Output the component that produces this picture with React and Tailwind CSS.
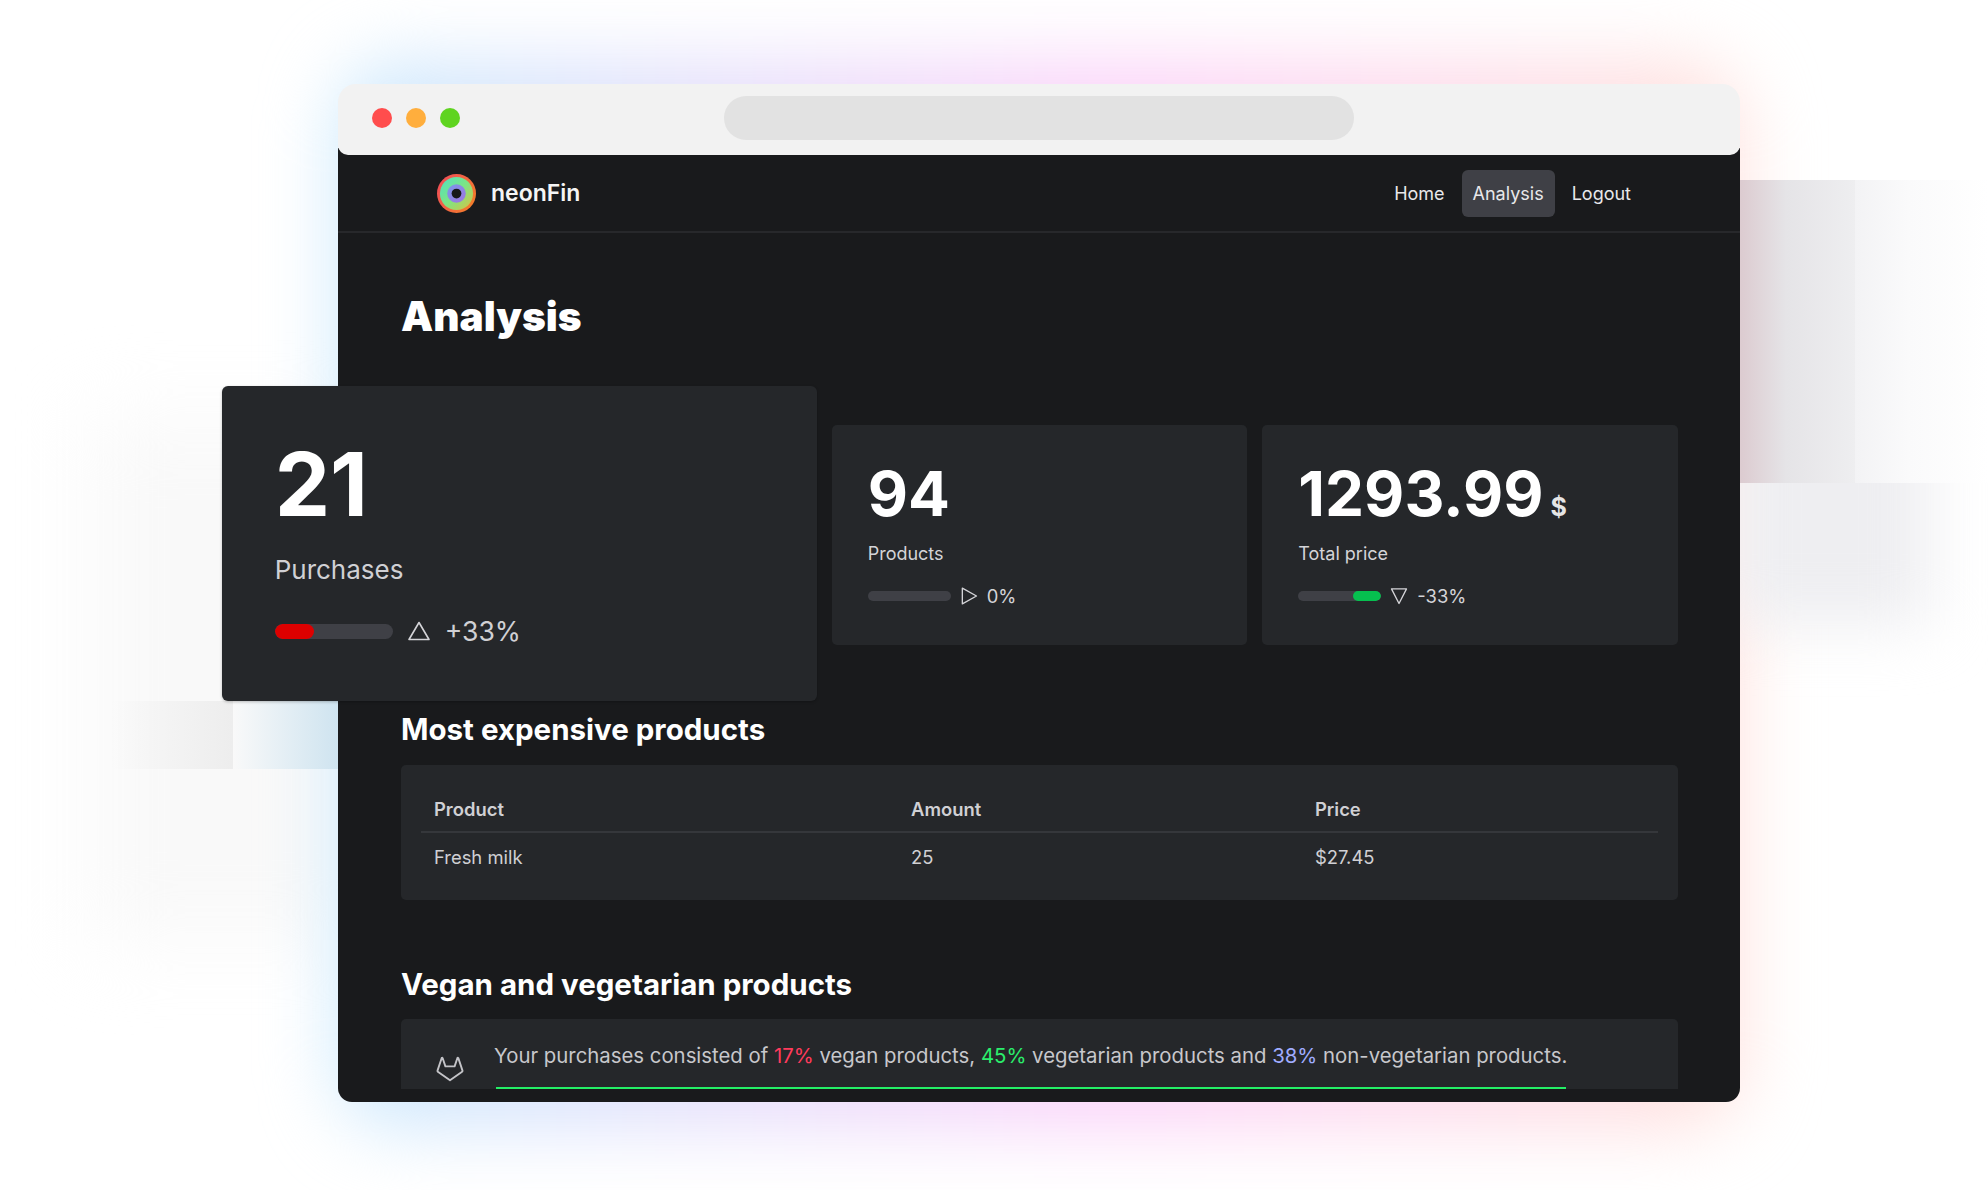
const F = { fontFamily: '"Inter", "Liberation Sans", sans-serif' };

function Tri({ dir, className }) {
  const d = {
    up: 'M12 3.5 L22 20.5 L2 20.5 Z',
    right: 'M4 2.5 L21 12 L4 21.5 Z',
    down: 'M3 3.5 L21 3.5 L12 21 Z',
  }[dir];
  return (
    <svg viewBox="0 0 24 24" fill="none" stroke="#d4d4d8" strokeWidth="1.6" strokeLinejoin="round" className={className}>
      <path d={d} />
    </svg>
  );
}

function Fox() {
  return (
    <svg viewBox="0 0 24 24" fill="none" stroke="#c4c4c8" strokeWidth="1.5" strokeLinejoin="round" strokeLinecap="round" className="w-[30px] h-[30px] shrink-0">
      <path d="m22 13.29-3.33-10a.42.42 0 0 0-.14-.18.38.38 0 0 0-.22-.11.39.39 0 0 0-.23.07.42.42 0 0 0-.14.18l-2.26 6.67H8.32L6.1 3.26a.42.42 0 0 0-.1-.18.38.38 0 0 0-.26-.08.39.39 0 0 0-.23.07.42.42 0 0 0-.14.18L2 13.29a.74.74 0 0 0 .27.83L12 21l9.69-6.88a.71.71 0 0 0 .31-.83Z" />
    </svg>
  );
}

function Logo() {
  return (
    <svg viewBox="0 0 40 40" className="w-[39px] h-[39px] shrink-0">
      <defs>
        <linearGradient id="lo" x1="0" y1="0" x2="1" y2="0.6">
          <stop offset="0" stopColor="#f0485c" />
          <stop offset="1" stopColor="#f37a2c" />
        </linearGradient>
        <linearGradient id="lg" x1="0" y1="0" x2="1" y2="1">
          <stop offset="0" stopColor="#4fe0c4" />
          <stop offset="0.5" stopColor="#7ce684" />
          <stop offset="1" stopColor="#dcc040" />
        </linearGradient>
        <linearGradient id="li" x1="0" y1="0" x2="1" y2="1">
          <stop offset="0" stopColor="#7a98e8" />
          <stop offset="1" stopColor="#a074e0" />
        </linearGradient>
      </defs>
      <circle cx="20" cy="20" r="20" fill="url(#lo)" />
      <circle cx="20" cy="20" r="17" fill="url(#lg)" />
      <circle cx="20" cy="20" r="9.5" fill="url(#li)" />
      <circle cx="20" cy="20" r="5" fill="#17181a" />
    </svg>
  );
}

function SmallCard({ value, unit, label, dir, pct, fill }) {
  return (
    <div className="bg-[#25272a] rounded-[5px] h-[220px] pl-[36px] pt-[34px]">
      <div className="flex items-baseline h-[70px]">
        <span className="text-[62px] leading-[70px] font-bold text-white">{value}</span>
        {unit && <span className="ml-[7px] text-[25px] font-bold text-[#e5e5e5]">{unit}</span>}
      </div>
      <div className="mt-[13px] text-[18px] leading-[24px] text-[#d4d4d8]">{label}</div>
      <div className="mt-[18px] flex items-center">
        <div className="w-[83px] h-[10px] rounded-full bg-[#3f4046] relative overflow-hidden">
          {fill && <div className="absolute right-0 top-0 h-full w-[28px] rounded-full bg-[#06c04f]" />}
        </div>
        <Tri dir={dir} className="ml-[8px] w-[20px] h-[20px]" />
        <span className="ml-[8px] text-[18.4px] leading-[24px] text-[#d4d4d8]">{pct}</span>
      </div>
    </div>
  );
}

export default function App() {
  return (
    <div style={F} className="relative h-[1190px] w-[1988px] overflow-hidden bg-white pl-[338px] pt-[84px]">
      {/* soft grey shadows behind everything */}
      <div className="absolute left-[90px] top-[420px] w-[270px] h-[520px] blur-[40px] bg-[#f9f9f9]" />
      {/* colour glow behind the window */}
      <div className="absolute left-[338px] top-[62px] w-[1404px] h-[1066px] blur-[36px] bg-gradient-to-r from-[#cbeafd] via-[#fbd2f9] via-55% to-[#ffe2dc] rounded-[60px]" />
      {/* ghost panels, right */}
      <div className="absolute left-[1730px] top-[400px] w-[200px] h-[225px] blur-[30px] bg-[#eeeef1]" />
      <div className="absolute left-[1740px] top-[180px] w-[115px] h-[303px] bg-gradient-to-r from-[#dccbd0] via-[#e5e4e7] via-40% to-[#eeeef0]" />
      <div className="absolute left-[1855px] top-[180px] w-[133px] h-[303px] bg-gradient-to-r from-[#f3f3f5] via-[#fafafb] via-40% to-white" />
      {/* ghost panels, left */}
      <div className="absolute left-[111px] top-[701px] w-[122px] h-[68px] bg-gradient-to-r from-transparent to-[#ededed]" />
      <div className="absolute left-[233px] top-[701px] w-[105px] h-[68px] bg-gradient-to-r from-[#f9f9f9] to-[#cfe4f0]" />

      <div className="relative w-[1402px] h-[1018px] flex flex-col">
        {/* browser chrome */}
        <div className="relative z-10 h-[71px] shrink-0 bg-[#f2f2f2] rounded-t-[18px] rounded-b-[10px] flex items-center pl-[34px] pb-[3px]">
          <div className="flex gap-[14px] shrink-0">
            <span className="w-[20px] h-[20px] rounded-full bg-[#ff4d4d]" />
            <span className="w-[20px] h-[20px] rounded-full bg-[#ffae3d]" />
            <span className="w-[20px] h-[20px] rounded-full bg-[#5fd420]" />
          </div>
          <div className="ml-[264px] w-[630px] h-[44px] rounded-[22px] bg-[#e2e2e2]" />
        </div>

        {/* dark page */}
        <div className="-mt-[7px] pt-[7px] flex-1 min-h-0 flex flex-col bg-[#191a1c] rounded-b-[14px]">
          {/* nav */}
          <div className="h-[78px] shrink-0 border-b-2 border-[#27282b] flex items-center justify-between pl-[99px] pr-[98px]">
            <div className="flex items-center">
              <Logo />
              <span className="ml-[15px] text-[23px] font-semibold text-[#f5f5f5]">neonFin</span>
            </div>
            <div className="flex items-center text-[18px] text-[#e8e8ea]">
              <span className="px-[11px]">Home</span>
              <span className="ml-[6px] h-[47px] px-[11px] flex items-center rounded-[6px] bg-[#3f4046]">Analysis</span>
              <span className="ml-[6px] px-[11px]">Logout</span>
            </div>
          </div>

          {/* main */}
          <div className="flex-1 min-h-0 pl-[63px] pr-[62px] flex flex-col">
            <h1 className="mt-[60px] text-[40.5px] leading-[48px] font-black text-white">Analysis</h1>

            <div className="mt-[84px] grid grid-cols-3 gap-[15px]">
              <div className="relative">
                <div className="absolute right-0 top-[-39px] w-[595px] h-[315px] rounded-[6px] bg-[#25272a] pl-[53px] pt-[48px] shadow-[0_1px_3px_rgba(0,0,0,0.25)]">
                  <div className="text-[88px] leading-[100px] font-bold text-white">21</div>
                  <div className="mt-[20px] text-[26px] leading-[32px] text-[#d0d0d4]">Purchases</div>
                  <div className="mt-[29px] flex items-center">
                    <div className="w-[118px] h-[15px] rounded-full bg-[#3f4046] relative overflow-hidden">
                      <div className="absolute left-0 top-0 h-full w-[39px] rounded-full bg-[#dd0000]" />
                    </div>
                    <Tri dir="up" className="ml-[14px] w-[24px] h-[24px]" />
                    <span className="ml-[14px] text-[26.6px] leading-[32px] text-[#d0d0d4]">+33%</span>
                  </div>
                </div>
              </div>
              <SmallCard value="94" label="Products" dir="right" pct="0%" />
              <SmallCard value="1293.99" unit="$" label="Total price" dir="down" pct="-33%" fill />
            </div>

            <h2 className="mt-[64px] text-[29.5px] leading-[40px] font-bold text-white">Most expensive products</h2>
            <div className="mt-[16px] h-[135px] shrink-0 rounded-[5px] bg-[#25272a] px-[20px] pt-[31px] text-[18.4px] text-[#d0d0d4]">
              <div className="grid grid-cols-[477px_404px_1fr] pl-[13px] h-[37px] border-b-2 border-[#35373b] font-semibold">
                <span>Product</span><span>Amount</span><span>Price</span>
              </div>
              <div className="grid grid-cols-[477px_404px_1fr] pl-[13px] pt-[11px]">
                <span>Fresh milk</span><span>25</span><span>$27.45</span>
              </div>
            </div>

            <h2 className="mt-[64px] text-[29.5px] leading-[40px] font-bold text-white">Vegan and vegetarian products</h2>
            <div className="mt-[15px] h-[70px] shrink-0 bg-[#25272a] rounded-t-[5px] flex pl-[34px]">
              <div className="pt-[35px]"><Fox /></div>
              <div className="ml-[29px] flex flex-col items-start w-[1070px]">
                <p className="pt-[22px] h-[68px] text-[20.35px] leading-[30px] text-[#c8c8cc] whitespace-nowrap">
                  Your purchases consisted of <span className="text-[#ff3b5c]">17%</span> vegan products, <span className="text-[#2bee6c]">45%</span> vegetarian products and <span className="text-[#a0acff]">38%</span> non-vegetarian products.
                </p>
                <div className="h-[2px] w-full ml-[2px] bg-[#24ee66]" />
              </div>
            </div>
          </div>
        </div>
      </div>
    </div>
  );
}
